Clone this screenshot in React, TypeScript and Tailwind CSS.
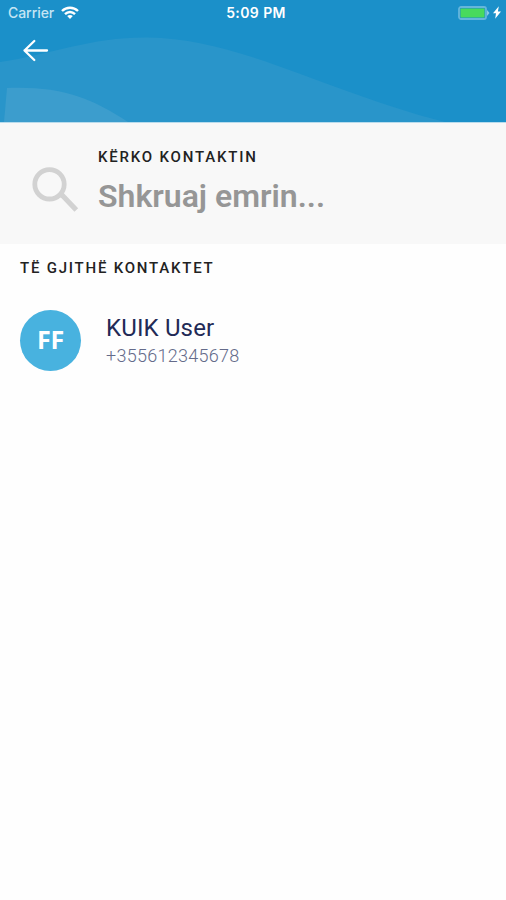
function StatusBar() {
  return (
    <div className="flex h-[27px] items-center justify-between pl-2 pr-[5px] font-[Inter,sans-serif] text-[14px] leading-[26px] text-white">
      <div className="-mt-0.5 flex flex-1 items-center gap-[7px]">
        <span className="font-medium tracking-[-0.05px] text-[#c4e5f4]">Carrier</span>
        <svg width="18" height="13" viewBox="0 0 18 13" fill="none" stroke="#fff" strokeWidth="2.4">
          <path d="M1 5C5.5 .7 12.5 .7 17 5" />
          <path d="M4 8.1c2.9-2.9 7.1-2.9 10 0" />
          <path d="M6.2 10.1c1.6-1.4 4-1.4 5.6 0L9 13z" fill="#fff" stroke="none" />
        </svg>
      </div>
      <span className="-mt-px ml-[3px] font-semibold tracking-[0.4px]">5:09 PM</span>
      <div className="-mt-0.5 flex flex-1 items-center justify-end gap-[3px]">
        <svg width="32" height="14" viewBox="0 0 32 14">
          <rect x="1" y="1" width="27" height="12" rx="2" fill="none" stroke="#65b6dc" strokeWidth="1.8" />
          <rect x="2.5" y="2.5" width="24" height="9" rx=".7" fill="#48da5d" />
          <path d="M29 4l2.5 3L29 10z" fill="#8dcae5" />
        </svg>
        <svg width="8" height="13" viewBox="0 0 8 13" fill="#fff">
          <path d="M5.8.3L0 7.300h3L2.200 12.700 8 5.500H4.900z" />
        </svg>
      </div>
    </div>
  );
}

function Header() {
  return (
    <header className="relative h-[122px] bg-[#1b90c9]">
      <svg className="absolute inset-0" width="506" height="122" viewBox="0 0 506 122">
        <path d="M0 62C54 54 90 37 148 37.500C238 38 330 93 445 122H0z" fill="#2995ca" />
        <path d="M7 88C60 86 90 97 128 122H4z" fill="#3c9dcd" />
      </svg>
      <div className="relative">
        <StatusBar />
        <button className="ml-[22px] mt-[12px] block" aria-label="Back">
          <svg width="27" height="24" viewBox="0 0 27 24" fill="none" stroke="#fff" strokeWidth="2.3" strokeLinecap="round" strokeLinejoin="round">
            <path d="M25 11.500H2.500M12.300 2L2.500 11.500l9.800 9.500" />
          </svg>
        </button>
      </div>
    </header>
  );
}

function SearchPanel() {
  return (
    <section className="flex h-[122px] border-t border-[#b9dced] bg-[#f8f8f8] pl-8">
      <svg className="mt-[43px]" width="47" height="47" viewBox="0 0 47 47" fill="none" stroke="#d2d2d2">
        <circle cx="17.500" cy="18.300" r="14.700" strokeWidth="4.800" />
        <path d="M28.500 29.500h2L44.300 44" strokeWidth="5.200" />
      </svg>
      <div className="ml-[19px] pt-[23px]">
        <div className="text-[15px] font-medium leading-[22px] tracking-[1.8px] text-[#222]">KËRKO KONTAKTIN</div>
        <div className="mt-[8px] text-[32px] font-semibold leading-[40px] text-[#969696]">Shkruaj emrin...</div>
      </div>
    </section>
  );
}

export default function App() {
  return (
    <main className="h-[900px] w-[506px] overflow-hidden bg-[#fefefe] font-[Roboto,sans-serif]">
      <Header />
      <SearchPanel />
      <section className="pl-5 pt-[13px]">
        <h2 className="text-[15px] font-medium leading-[22px] tracking-[1.78px] text-[#222]">TË GJITHË KONTAKTET</h2>
        <div className="mt-[31px] flex">
          <div className="flex size-[61px] items-center justify-center rounded-full bg-[#48b2df] pb-0.5 font-['Open_Sans',sans-serif] text-[25px] font-bold tracking-[-0.3px] text-white">FF</div>
          <div className="ml-[25px] pt-[3px]">
            <div className="text-[24px] leading-[30px] tracking-[0.15px] text-[#222a56]">KUIK User</div>
            <div className="text-[18px] font-light leading-[25px] tracking-[0.27px] text-[#646b8a]">+355612345678</div>
          </div>
        </div>
      </section>
    </main>
  );
}
